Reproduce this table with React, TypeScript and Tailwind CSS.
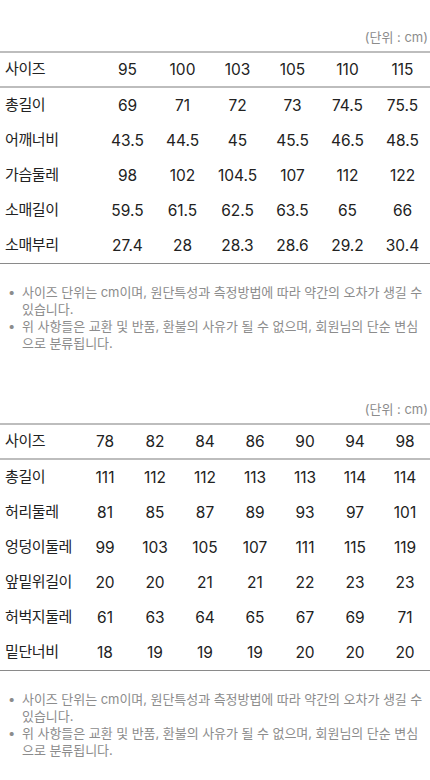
import React from "react";

type Table = { cols: string; rows: [string, ...string[]][] };

const t1: Table = {
  cols: "grid-cols-[100px_repeat(6,1fr)]",
  rows: [
    ["사이즈", "95", "100", "103", "105", "110", "115"],
    ["총길이", "69", "71", "72", "73", "74.5", "75.5"],
    ["어깨너비", "43.5", "44.5", "45", "45.5", "46.5", "48.5"],
    ["가슴둘레", "98", "102", "104.5", "107", "112", "122"],
    ["소매길이", "59.5", "61.5", "62.5", "63.5", "65", "66"],
    ["소매부리", "27.4", "28", "28.3", "28.6", "29.2", "30.4"],
  ],
};

const t2: Table = {
  cols: "grid-cols-[80px_repeat(7,1fr)]",
  rows: [
    ["사이즈", "78", "82", "84", "86", "90", "94", "98"],
    ["총길이", "111", "112", "112", "113", "113", "114", "114"],
    ["허리둘레", "81", "85", "87", "89", "93", "97", "101"],
    ["엉덩이둘레", "99", "103", "105", "107", "111", "115", "119"],
    ["앞밑위길이", "20", "20", "21", "21", "22", "23", "23"],
    ["허벅지둘레", "61", "63", "64", "65", "67", "69", "71"],
    ["밑단너비", "18", "19", "19", "19", "20", "20", "20"],
  ],
};

const font = "font-['Inter','Noto_Sans_CJK_KR',sans-serif]";

function SizeTable({ table }: { table: Table }) {
  return (
    <div className="border-t-2 border-[#bdbdbd] border-b border-b-[#8a8a8a]">
      {table.rows.map((r, i) => (
        <div
          key={i}
          className={`grid ${table.cols} items-center ${
            i === 0 ? "h-[35px] border-b-2 border-[#bdbdbd]" : "h-[35px]"
          }`}
        >
          <div className="pl-[5px] text-[15px] tracking-[-0.4px] text-[#222]">{r[0]}</div>
          {r.slice(1).map((v, j) => (
            <div key={j} className="text-center text-[15.5px] text-[#222]">
              {v}
            </div>
          ))}
        </div>
      ))}
    </div>
  );
}

function Notes() {
  return (
    <ul className="mt-[20px] flex flex-col gap-[1px] text-[13px] leading-[16.5px] text-[#8c8c8c] tracking-[-0.05px]">
      <li className="flex">
        <span className="w-[22px] shrink-0 pl-[8px]">•</span>
        <span>
          <span className="block whitespace-nowrap">사이즈 단위는 cm이며, 원단특성과 측정방법에 따라 약간의 오차가 생길 수</span>
          <span className="block whitespace-nowrap">있습니다.</span>
        </span>
      </li>
      <li className="flex">
        <span className="w-[22px] shrink-0 pl-[8px]">•</span>
        <span>
          <span className="block whitespace-nowrap">위 사항들은 교환 및 반품, 환불의 사유가 될 수 없으며, 회원님의 단순 변심</span>
          <span className="block whitespace-nowrap">으로 분류됩니다.</span>
        </span>
      </li>
    </ul>
  );
}

function Unit() {
  return (
    <div className="text-right pr-[2px] text-[13px] leading-[18px] text-[#8c8c8c] mb-[5px]">
      (단위 : cm)
    </div>
  );
}

export default function App() {
  return (
    <div className={`w-[430px] h-[780px] bg-white overflow-hidden ${font}`}>
      <div className="pt-[28px]">
        <Unit />
        <SizeTable table={t1} />
        <Notes />
      </div>
      <div className="pt-[49px]">
        <Unit />
        <SizeTable table={t2} />
        <Notes />
      </div>
    </div>
  );
}
